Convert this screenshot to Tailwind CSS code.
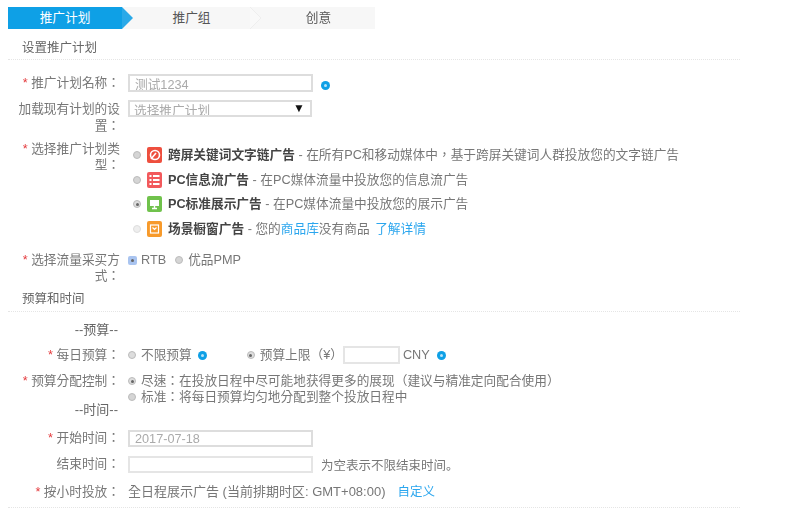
<!DOCTYPE html>
<html lang="en">
  <head>
    <meta charset="utf-8" />
    <meta content="width=device-width, initial-scale=1.0" name="viewport" />
    <title>推广计划</title>
    <script src="https://cdn.jsdelivr.net/npm/@tailwindcss/browser@4"></script>
  </head>
  <body class="bg-white text-[#777] text-[12.7px] leading-[16px] font-['Liberation_Sans','Noto_Sans_CJK_TC',sans-serif]">
    <div class="w-[800px] h-[512px] overflow-hidden pt-[7px] pl-[8px] blur-[0.45px]">
      <!-- steps -->
      <div class="flex w-[367px] h-[22px] bg-[#f7f7f7] text-[#555] leading-[22px]">
        <div class="w-[114px] bg-[#0ea0e6] text-white text-center">推广计划</div>
        <div class="w-0 h-0 border-y-[11px] border-y-transparent border-l-[11px] border-l-[#2aa9e8]"></div>
        <div class="w-[117px] text-center">推广组</div>
        <svg class="w-[12px] h-[22px]" viewBox="0 0 12 22"><path d="M0 0L11 11L0 22" fill="#f9f9f9" stroke="#eee" /></svg>
        <div class="flex-1 text-center">创意</div>
      </div>

      <h2 class="mt-[10px] ml-[14px] h-[20px] text-[12.5px] leading-[18px] font-normal text-[#666]">设置推广计划</h2>
      <div class="w-[732px] border-t border-dotted border-[#e5e5e5]"></div>

      <!-- name -->
      <div class="flex mt-[14px] h-[26px]">
        <label class="w-[112px] text-right pt-[1px]"><span class="text-[#e4393c]">*</span> 推广计划名称：</label>
        <div class="ml-[8px] flex items-start">
          <input class="w-[185px] h-[18px] border-2 border-[#ddd] px-[5px] text-[#aaa] text-[12.7px] leading-[14px]" value="测试1234" />
          <span class="ml-[8px] mt-[7px] w-[9px] h-[9px] rounded-full bg-[#0ea0e6] flex items-center justify-center"><i class="block w-[3px] h-[3px] rounded-full bg-white/70"></i></span>
        </div>
      </div>

      <!-- load -->
      <div class="flex h-[41px]">
        <label class="w-[112px] text-right leading-[17px] pt-[1px]">加载现有计划的设<br />置：</label>
        <div class="ml-[8px] w-[184px] h-[17px] border-2 border-[#ddd] px-[4px] flex justify-between overflow-hidden text-[#aaa] leading-[18px]">
          <span>选择推广计划</span><span class="text-[#111] text-[12px] leading-[12px] pr-[1px]">▼</span>
        </div>
      </div>

      <!-- type -->
      <div class="flex h-[111px]">
        <label class="w-[112px] text-right"><span class="text-[#e4393c]">*</span> 选择推广计划类<br />型：</label>
        <div class="ml-[8px] pt-[6px] flex flex-col gap-[8.5px]">
          <div class="flex items-center h-[16px] pl-[5px]">
            <span class="w-[8px] h-[8px] rounded-full bg-[#d5d5d5] border border-[#bbb]"></span>
            <svg class="ml-[6px] w-[15px] h-[16px]" viewBox="0 0 15 16"><rect width="15" height="16" rx="2" fill="#ee4f3e" /><circle cx="8" cy="8" r="4.5" fill="none" stroke="#fff" stroke-width="1.6" /><path d="M4 12l5-6" stroke="#fff" stroke-width="1.6" /></svg>
            <span class="ml-[6px]"><b class="text-[#444]">跨屏关键词文字链广告</b> - 在所有PC和移动媒体中，基于跨屏关键词人群投放您的文字链广告</span>
          </div>
          <div class="flex items-center h-[16px] pl-[5px]">
            <span class="w-[8px] h-[8px] rounded-full bg-[#d5d5d5] border border-[#bbb]"></span>
            <svg class="ml-[6px] w-[15px] h-[16px]" viewBox="0 0 15 16"><rect width="15" height="16" rx="2" fill="#f2595c" /><path d="M2.5 4h2M6 4h6.5M2.5 8h2M6 8h6.5M2.5 12h2M6 12h6.5" stroke="#fff" stroke-width="2" /></svg>
            <span class="ml-[6px]"><b class="text-[#444]">PC信息流广告</b> - 在PC媒体流量中投放您的信息流广告</span>
          </div>
          <div class="flex items-center h-[16px] pl-[5px]">
            <span class="w-[8px] h-[8px] rounded-full bg-[#ddd] border border-[#bbb] flex items-center justify-center"><i class="block w-[3px] h-[3px] rounded-full bg-[#666]"></i></span>
            <svg class="ml-[6px] w-[15px] h-[16px]" viewBox="0 0 15 16"><rect width="15" height="16" rx="2" fill="#70c24c" /><rect x="3" y="4" width="9" height="6" fill="#fff" /><path d="M7.5 10v2M5 12.5h5" stroke="#fff" stroke-width="1.4" /></svg>
            <span class="ml-[6px]"><b class="text-[#444]">PC标准展示广告</b> - 在PC媒体流量中投放您的展示广告</span>
          </div>
          <div class="flex items-center h-[16px] pl-[5px]">
            <span class="w-[8px] h-[8px] rounded-full bg-[#eee] border border-[#ddd]"></span>
            <svg class="ml-[6px] w-[15px] h-[16px]" viewBox="0 0 15 16"><rect width="15" height="16" rx="2" fill="#f79a2b" /><rect x="3.5" y="4" width="8" height="8" fill="none" stroke="#fff" stroke-width="1.2" /><path d="M5.5 6.5l2 2 2-2" fill="none" stroke="#fff" stroke-width="1.2" /></svg>
            <span class="ml-[6px]"><b class="text-[#444]">场景橱窗广告</b> - 您的<a class="text-[#2ba6ee]">商品库</a>没有商品 <a class="ml-[2px] text-[#2ba6ee]">了解详情</a></span>
          </div>
        </div>
      </div>

      <!-- traffic -->
      <div class="flex h-[38px]">
        <label class="w-[112px] text-right"><span class="text-[#e4393c]">*</span> 选择流量采买方<br />式：</label>
        <div class="ml-[8px] flex items-center h-[16px]">
          <span class="w-[9px] h-[9px] rounded-[2px] bg-[#a9c4f0] flex items-center justify-center"><i class="block w-[3px] h-[3px] rounded-full bg-[#666]"></i></span>
          <span class="ml-[4px]">RTB</span>
          <span class="ml-[9px] w-[8px] h-[8px] rounded-full bg-[#d5d5d5] border border-[#bbb]"></span>
          <span class="ml-[5px]">优品PMP</span>
        </div>
      </div>

      <h2 class="ml-[14px] h-[21px] text-[12.5px] leading-[18px] font-normal text-[#666]">预算和时间</h2>
      <div class="w-[732px] border-t border-dotted border-[#e5e5e5]"></div>

      <div class="mt-[10px] h-[24px] w-[110px] text-right text-[13px] text-[#666]">--预算--</div>

      <!-- daily -->
      <div class="flex h-[27px] items-start">
        <label class="w-[112px] text-right pt-[1px]"><span class="text-[#e4393c]">*</span> 每日预算：</label>
        <div class="ml-[8px] flex items-center h-[18px]">
          <span class="w-[8px] h-[8px] rounded-full bg-[#ddd] border border-[#bbb]"></span>
          <span class="ml-[5px]">不限预算</span>
          <span class="ml-[6px] w-[9px] h-[9px] rounded-full bg-[#0ea0e6] flex items-center justify-center"><i class="block w-[3px] h-[3px] rounded-full bg-white/70"></i></span>
          <span class="ml-[40px] w-[8px] h-[8px] rounded-full bg-[#ddd] border border-[#bbb] flex items-center justify-center"><i class="block w-[3px] h-[3px] rounded-full bg-[#666]"></i></span>
          <span class="ml-[5px]">预算上限（¥）</span>
          <input class="w-[57px] h-[18px] border-2 border-[#e5e5e5]" />
          <span class="ml-[3px]">CNY</span>
          <span class="ml-[7px] w-[9px] h-[9px] rounded-full bg-[#0ea0e6] flex items-center justify-center"><i class="block w-[3px] h-[3px] rounded-full bg-white/70"></i></span>
        </div>
      </div>

      <!-- pacing -->
      <div class="flex h-[29px]">
        <label class="w-[112px] text-right"><span class="text-[#e4393c]">*</span> 预算分配控制：</label>
        <div class="ml-[8px] flex flex-col">
          <div class="flex items-center h-[16px]">
            <span class="w-[8px] h-[8px] rounded-full bg-[#ddd] border border-[#bbb] flex items-center justify-center"><i class="block w-[3px] h-[3px] rounded-full bg-[#666]"></i></span>
            <span class="ml-[5px]">尽速：在投放日程中尽可能地获得更多的展现（建议与精准定向配合使用）</span>
          </div>
          <div class="flex items-center h-[16px]">
            <span class="w-[8px] h-[8px] rounded-full bg-[#d5d5d5] border border-[#bbb]"></span>
            <span class="ml-[5px]">标准：将每日预算均匀地分配到整个投放日程中</span>
          </div>
        </div>
      </div>

      <div class="h-[28px] w-[110px] text-right text-[13px] text-[#666]">--时间--</div>

      <div class="flex h-[26px] items-start">
        <label class="w-[112px] text-right"><span class="text-[#e4393c]">*</span> 开始时间：</label>
        <input class="ml-[8px] w-[185px] h-[17px] border-2 border-[#ddd] px-[5px] text-[#aaa] text-[12.7px]" value="2017-07-18" />
      </div>

      <div class="flex h-[27px] items-start">
        <label class="w-[112px] text-right">结束时间：</label>
        <input class="ml-[8px] w-[185px] h-[17px] border-2 border-[#e5e5e5]" />
        <span class="ml-[8px] pt-[1px] text-[12.5px] font-['Noto_Sans_CJK_SC',sans-serif]">为空表示不限结束时间。</span>
      </div>

      <div class="flex h-[24px] items-start pt-[1px]">
        <label class="w-[112px] text-right"><span class="text-[#e4393c]">*</span> 按小时投放：</label>
        <span class="ml-[8px] text-[13px]">全日程展示广告 (当前排期时区: GMT+08:00)</span>
        <a class="ml-[12px] text-[12.5px] text-[#2ba6ee]">自定义</a>
      </div>
      <div class="w-[732px] border-t border-dotted border-[#e5e5e5]"></div>
    </div>
  </body>
</html>
